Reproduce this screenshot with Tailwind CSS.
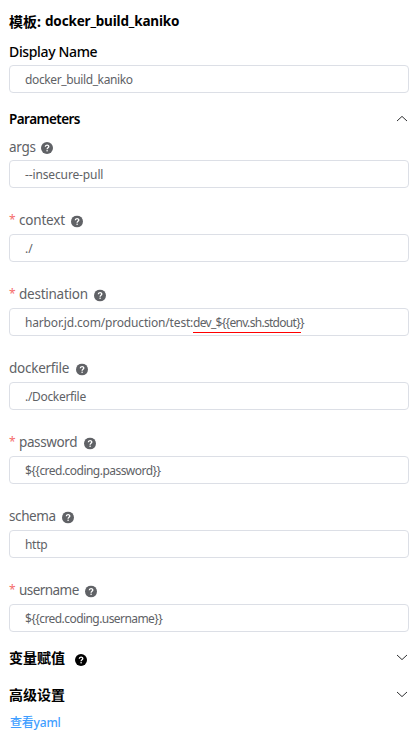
<!DOCTYPE html>
<html lang="zh-CN">
<head>
<meta charset="utf-8">
<title>docker_build_kaniko</title>
<script src="https://cdn.jsdelivr.net/npm/@tailwindcss/browser@4"></script>
</head>
<body class="bg-white font-['Noto_Sans','Noto_Sans_CJK_SC',sans-serif]">
<svg class="hidden">
  <symbol id="help" viewBox="0 0 12 12"><circle cx="6" cy="6" r="6" fill="currentColor"/><path d="M4.3 4.8C4.3 2.5 7.8 2.5 7.8 4.6C7.8 5.8 6.1 5.9 6.1 7.2" fill="none" stroke="#fff" stroke-width="1.3"/><circle cx="6.1" cy="8.8" r=".8" fill="#fff"/></symbol>
  <symbol id="down" viewBox="0 0 12 7"><path d="M1 1L6 5.6L11 1" fill="none" stroke="currentColor" stroke-width="1"/></symbol>
</svg>
<main class="h-[745px] w-[420px] overflow-hidden pl-[9px] pr-[11px] text-[13.5px] text-[#606266] whitespace-nowrap">
  <h1 class="flex h-[38px] items-center pt-[4px] font-bold text-black"><span class="w-[36px] text-[14px]">模板:</span><span class="tracking-[-0.17px]">docker_build_kaniko</span></h1>
  <div class="flex h-[27px] items-center text-[14px] font-medium text-black"><span class="tracking-[-0.35px]">Display Name</span></div>
  <div class="flex h-7 items-center rounded border border-[#dcdfe6] px-[15px] pt-[2px] text-[12px]"><span class="tracking-[-0.38px]">docker_build_kaniko</span></div>
  <div class="flex h-[46px] items-center justify-between pt-[5px] font-semibold text-black"><span class="pt-px tracking-[-0.55px]">Parameters</span><svg class="mr-px h-[7px] w-3 rotate-180 text-[#303133]"><use href="#down"/></svg></div>

  <label class="flex h-[21px] items-center pb-[6px]"><span class="w-[32px] pt-[2px] tracking-[-0.25px]">args</span><svg class="size-3 translate-y-px"><use href="#help"/></svg></label>
  <div class="flex h-7 items-center rounded border border-[#dcdfe6] px-[15px] pt-[2px] text-[12px]"><span class="tracking-[-0.13px]">--insecure-pull</span></div>

  <label class="flex h-[46px] items-center pt-[17px]"><span class="w-[10px] text-[12px] text-[#f56c6c]">*</span><span class="w-[52px] pt-[2px] tracking-[-0.2px]">context</span><svg class="size-3 translate-y-[1.5px]"><use href="#help"/></svg></label>
  <div class="flex h-7 items-center rounded border border-[#dcdfe6] px-[15px] pt-[2px] text-[12px]"><span>./</span></div>

  <label class="flex h-[46px] items-center pt-[17px]"><span class="w-[10px] text-[12px] text-[#f56c6c]">*</span><span class="w-[75px] pt-[2px] tracking-[-0.25px]">destination</span><svg class="size-3 translate-y-[1.5px]"><use href="#help"/></svg></label>
  <div class="relative flex h-7 items-center rounded border border-[#dcdfe6] px-[15px] pt-[2px] text-[12px]"><span class="w-[168px] tracking-[-0.17px]">harbor.jd.com/production/test:</span><span class="tracking-[-0.7px]">dev_${{env.sh.stdout}}</span><div class="absolute top-[23px] left-[183px] h-px w-[108px] bg-[rgb(255,0,0)]"></div></div>

  <label class="flex h-[46px] items-center pt-[17px]"><span class="w-[67px] pt-[2px] tracking-[-0.25px]">dockerfile</span><svg class="size-3 translate-y-[1.5px]"><use href="#help"/></svg></label>
  <div class="flex h-7 items-center rounded border border-[#dcdfe6] px-[15px] pt-[2px] text-[12px]"><span class="tracking-[-0.32px]">./Dockerfile</span></div>

  <label class="flex h-[46px] items-center pt-[17px]"><span class="w-[10px] text-[12px] text-[#f56c6c]">*</span><span class="w-[65px] pt-[2px] tracking-[-0.38px]">password</span><svg class="size-3 translate-y-[1.5px]"><use href="#help"/></svg></label>
  <div class="flex h-7 items-center rounded border border-[#dcdfe6] px-[15px] pt-[2px] text-[12px]"><span class="tracking-[-0.53px]">${{cred.coding.password}}</span></div>

  <label class="flex h-[46px] items-center pt-[17px]"><span class="w-[53px] pt-[2px] tracking-[-0.4px]">schema</span><svg class="size-3 translate-y-[1.5px]"><use href="#help"/></svg></label>
  <div class="flex h-7 items-center rounded border border-[#dcdfe6] px-[15px] pt-[2px] text-[12px]"><span class="tracking-[-0.3px]">http</span></div>

  <label class="flex h-[46px] items-center pt-[17px]"><span class="w-[10px] text-[12px] text-[#f56c6c]">*</span><span class="w-[66px] pt-[2px] tracking-[-0.55px]">username</span><svg class="size-3 translate-y-[1.5px]"><use href="#help"/></svg></label>
  <div class="flex h-7 items-center rounded border border-[#dcdfe6] px-[15px] pt-[2px] text-[12px]"><span class="tracking-[-0.57px]">${{cred.coding.username}}</span></div>

  <div class="flex h-[51px] items-center text-[14px] font-semibold text-black"><span class="w-[66px]">变量赋值</span><svg class="size-3 translate-y-[2px]"><use href="#help"/></svg><svg class="mr-px ml-auto h-[7px] w-3 text-[#303133]"><use href="#down"/></svg></div>
  <div class="flex h-[22px] items-center justify-between text-[14px] font-semibold text-black"><span>高级设置</span><svg class="mr-px h-[7px] w-3 text-[#303133]"><use href="#down"/></svg></div>
  <div class="flex h-[35px] items-center pl-px text-[12px] font-medium text-[#409eff]"><span class="tracking-[-0.2px]">查看yaml</span></div>
</main>
</body>
</html>
